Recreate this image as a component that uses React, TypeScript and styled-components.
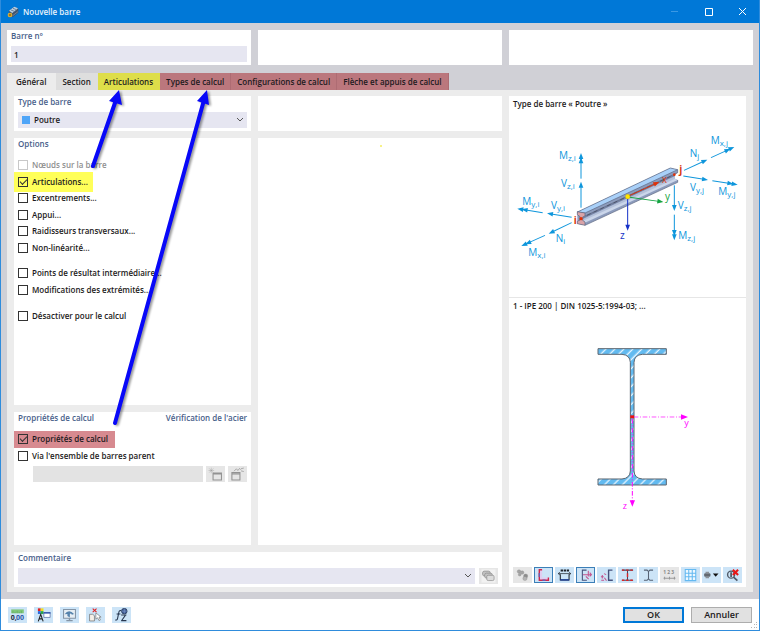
import React, { useState } from "react";
import styled, { createGlobalStyle, css } from "styled-components";

const GlobalStyle = createGlobalStyle`
  * { box-sizing: border-box; }
  body { margin: 0; background: #fff; }
  body, button, input, select {
    font-family: "Open Sans", "Noto Sans", sans-serif;
    font-size: 8px;
    font-weight: 600;
    line-height: 12px;
    color: #1c1a20;
  }
  button, input, select { margin: 0; padding: 0; border: 0; border-radius: 0; }
`;

const Window = styled.main`
  position: relative;
  display: flex;
  flex-direction: column;
  min-height: 100vh;
  border: 1px solid #2f8cdc;
  border-top: 0;
  background: #fff;
`;

const TitleBar = styled.header`
  display: flex;
  align-items: center;
  height: 23px;
  padding-left: 6px;
  background: #0078d7;
  color: #e8f3fc;
`;

const Title = styled.h1`
  flex: 1;
  margin: 0 0 0 4px;
  font-size: 8px;
  font-weight: 600;
`;

const WindowButton = styled.button`
  display: grid;
  place-items: center;
  width: 34px;
  height: 23px;
  background: transparent;
`;

const Body = styled.div`
  flex: 1;
  display: flex;
  flex-direction: column;
  padding: 7px 6px;
  background: #d0d0d6;
`;

const TopCards = styled.div`
  display: grid;
  grid-template-columns: repeat(3, 1fr);
  gap: 7px;
  margin-bottom: 8px;
`;

const Card = styled.section<{ $area?: string }>`
  display: flex;
  flex-direction: column;
  min-width: 0;
  min-height: 35px;
  padding: 0 4px 3px;
  background: #fff;
  grid-area: ${(p) => p.$area ?? "auto"};
`;

const Heading = styled.h2`
  display: flex;
  justify-content: space-between;
  margin: 0;
  height: 16px;
  font-size: 8px;
  font-weight: 600;
  color: #48608a;
`;

const TextInput = styled.input`
  flex: 1 1 16px;
  min-width: 0;
  width: 100%;
  height: 16px;
  padding: 0 3px;
  background: #e6e6f1;
  &:disabled { background: #e3e3e3; }
`;

const Tabs = styled.div`
  display: flex;
  height: 17px;
`;

type Tone = "active" | "plain" | "yellow" | "red";
const tabTone: Record<Tone, string> = {
  active: "#ececec",
  plain: "#dedede",
  yellow: "#dede49",
  red: "#bb777d",
};

const Tab = styled.button<{ $tone: Tone }>`
  padding: 1px ${(p) => (p.$tone === "active" ? 9 : 6)}px 0;
  white-space: nowrap;
  background: ${(p) => tabTone[p.$tone]};
  border-right: 1px solid ${(p) => (p.$tone === "red" ? "#ae6c73" : tabTone[p.$tone])};
`;

const TabPanel = styled.div`
  flex: 1;
  display: grid;
  grid-template-columns: 237fr 244fr 237fr;
  grid-template-rows: 35px 2fr 1fr 35px;
  grid-template-areas:
    "type blank preview"
    "options main preview"
    "props main preview"
    "comment comment preview";
  gap: 7px;
  padding: 6px 7px 5px;
  background: #ececec;
`;

const SelectBox = styled.div`
  position: relative;
  display: flex;
  flex: 1;
  height: 16px;
`;

const Select = styled.select<{ $swatch?: boolean }>`
  appearance: none;
  flex: 1;
  height: 16px;
  padding: 0 14px 0 ${(p) => (p.$swatch ? 16 : 4)}px;
  background: #e6e6f1;
`;

const Chevron = styled.svg`
  position: absolute;
  right: 3px;
  top: 5px;
  pointer-events: none;
`;

const Swatch = styled.span`
  position: absolute;
  left: 4px;
  top: 4px;
  width: 8px;
  height: 8px;
  background: #4fa5f8;
`;

const Options = styled.div`
  padding-top: 3px;
`;

const CheckGroup = styled.div<{ $height: number }>`
  display: grid;
  grid-auto-rows: 1fr;
  align-items: center;
  justify-items: start;
  height: ${(p) => p.$height}px;
  margin-bottom: 9px;
`;

const PropsGroup = styled(CheckGroup)`
  margin: 3px 0 1px;
`;

const CheckLabel = styled.label<{ $mark?: "yellow" | "red"; $disabled?: boolean }>`
  display: flex;
  align-items: center;
  gap: 4px;
  height: 16px;
  white-space: nowrap;
  color: ${(p) => (p.$disabled ? "#8f8f8f" : "inherit")};
  ${(p) =>
    p.$mark === "yellow" &&
    css`
      height: 20px;
      margin: -2px 0 -2px -4px;
      padding: 0 5px 0 4px;
      background: #ffff59;
    `}
  ${(p) =>
    p.$mark === "red" &&
    css`
      height: 17px;
      margin-left: -4px;
      padding: 0 7px 0 4px;
      background: #d78a90;
    `}
`;

const CheckInput = styled.input`
  appearance: none;
  display: grid;
  width: 10px;
  height: 10px;
  border: 1px solid #333;
  background: transparent;
  &:disabled { border-color: #c8c8c8; }
  &:checked::after {
    content: "";
    width: 6px;
    height: 3px;
    margin: 1px 0 0 1px;
    border: solid #333;
    border-width: 0 0 1px 1px;
    rotate: -45deg;
  }
`;

const ParentRow = styled.div`
  display: flex;
  gap: 3px;
  padding-left: 15px;
`;

const Row = styled.div`
  display: flex;
  gap: 4px;
`;

const ToolButton = styled.button<{ $state?: "on" | "off" }>`
  display: grid;
  place-items: center;
  flex: none;
  width: 19px;
  height: 16px;
  background: ${(p) => (p.$state === "off" ? "#e6e6e6" : "#cce4f7")};
  box-shadow: ${(p) => (p.$state === "on" ? "inset 0 0 0 1px #3c7fb8" : "none")};
`;

const Preview = styled(Card)`
  padding: 0 0 4px;
`;

const PreviewTitle = styled.h3`
  margin: 0;
  height: 16px;
  padding: 2px 4px 0;
  font-size: 8px;
  font-weight: 600;
`;

const BeamSvg = styled.svg`
  display: block;
  width: 100%;
  font-weight: 400;
`;

const SectionPart = styled.div`
  flex: 1;
  display: flex;
  flex-direction: column;
  border-top: 1px solid #e6e6e6;
`;

const SectionSvg = styled.svg`
  display: block;
  width: 100%;
  flex: 1;
  min-height: 0;
  font-weight: 400;
`;

const Toolbar = styled.div<{ $gap: number }>`
  display: flex;
  gap: ${(p) => p.$gap}px;
  padding: 0 4px;
`;

const Footer = styled.footer`
  display: flex;
  align-items: center;
  justify-content: space-between;
  height: 31px;
  padding: 0 7px 0 3px;
`;

const DialogButtons = styled.div`
  display: flex;
  gap: 7px;
`;

const DialogButton = styled.button<{ $primary?: boolean }>`
  width: 61px;
  height: 16px;
  font-size: 9px;
  line-height: 10px;
  background: #e1e1e1;
  border: ${(p) => (p.$primary ? "2px solid #0078d7" : "1px solid #adadad")};
`;

const Grip = styled.svg`
  position: absolute;
  right: 1px;
  bottom: 1px;
`;

const Annotations = styled.svg`
  position: absolute;
  left: -1px;
  top: 0;
  pointer-events: none;
`;

const ArrowLayer = styled.g`
  filter: drop-shadow(2px 1px 1px rgba(0, 0, 0, 0.4));
`;

function Caret() {
  return (
    <Chevron width="8" height="6" viewBox="0 0 8 6" fill="none" stroke="#555">
      <path d="M1 1 L4 4 L7 1" />
    </Chevron>
  );
}

function Check(props: {
  text: string;
  checked?: boolean;
  disabled?: boolean;
  mark?: "yellow" | "red";
}) {
  return (
    <CheckLabel $mark={props.mark} $disabled={props.disabled}>
      <CheckInput type="checkbox" defaultChecked={props.checked} disabled={props.disabled} />
      {props.text}
    </CheckLabel>
  );
}

/* Force or moment arrow; a moment carries a second head. */
function Arrow(props: {
  x1: number;
  y1: number;
  x2: number;
  y2: number;
  color?: string;
  double?: boolean;
}) {
  const { x1, y1, x2, y2, color = "#0e96dc", double } = props;
  const angle = (Math.atan2(y2 - y1, x2 - x1) * 180) / Math.PI;
  const length = Math.hypot(x2 - x1, y2 - y1);
  return (
    <g transform={`translate(${x1} ${y1}) rotate(${angle})`} fill={color} stroke={color}>
      <path d={`M0 0H${length - 8}`} strokeWidth="3" />
      <path d={`M${length} 0l-18 -7v14z`} stroke="none" />
      {double && <path d={`M${length - 13} 0l-18 -7v14z`} stroke="none" />}
    </g>
  );
}

function ForceLabel(props: { x: number; y: number; main: string; sub: string }) {
  return (
    <text x={props.x} y={props.y} fontSize="30" fontWeight="500" fill="#0e96dc">
      {props.main}
      <tspan fontSize="24" dy="6">
        {props.sub}
      </tspan>
    </text>
  );
}

function BeamDiagram() {
  return (
    <BeamSvg viewBox="12 -54 711 555" aria-label="Poutre">
      <path d="M217 246L496 114L518 119V128L510 134V146L518 150V157L240 286L217 281Z" fill="#8c9bbc" />
      <path d="M233 261L510 132V150L233 277Z" fill="#b3c0da" />
      <path d="M233 261L510 132V138L233 267Z" fill="#7683a5" />
      <path d="M233 273L510 146L518 150L240 278Z" fill="#cbd6ea" />
      <path d="M217 246L496 114L518 119L240 249Z" fill="#a9d0f8" />
      <g stroke="#59637e" strokeWidth="2" strokeLinejoin="round" fill="none">
        <path d="M217 246L496 114L518 119L240 249ZM240 258L518 128V119M240 286L518 157V150" />
        <path
          d="M217 245L240 249V258L233 261V271L240 276V286L217 281V274L225 270V260L217 254Z"
          fill="#d9a3a8"
        />
      </g>
      <path d="M246 256L508 134" stroke="#3f4658" strokeWidth="2" strokeDasharray="12 10" />
      <circle cx="228" cy="266" r="5" fill="#e03008" />
      <circle cx="508" cy="134" r="4" fill="#e03008" />

      <Arrow x1={228} y1={233} x2={228} y2={155} />
      <Arrow x1={228} y1={146} x2={228} y2={69} double />
      <Arrow x1={200} y1={262} x2={126} y2={250} />
      <Arrow x1={113} y1={248} x2={37} y2={236} double />
      <Arrow x1={200} y1={278} x2={131} y2={311} />
      <Arrow x1={120} y1={316} x2={49} y2={348} double />
      <Arrow x1={537} y1={121} x2={607} y2={89} />
      <Arrow x1={618} y1={83} x2={688} y2={51} double />
      <Arrow x1={535} y1={138} x2={609} y2={150} />
      <Arrow x1={622} y1={152} x2={698} y2={164} double />
      <Arrow x1={508} y1={166} x2={508} y2={243} />
      <Arrow x1={508} y1={254} x2={508} y2={331} double />
      <Arrow x1={368} y1={199} x2={463} y2={156} color="#e03008" />
      <Arrow x1={368} y1={201} x2={475} y2={216} color="#12a340" />
      <Arrow x1={368} y1={201} x2={368} y2={302} color="#1531c8" />
      <circle cx="368" cy="200" r="7" fill="#ffe600" stroke="#d4b000" />

      <ForceLabel x={162} y={87} main="M" sub="z,i" />
      <ForceLabel x={168} y={170} main="V" sub="z,i" />
      <ForceLabel x={52} y={224} main="M" sub="y,i" />
      <ForceLabel x={138} y={238} main="V" sub="y,i" />
      <ForceLabel x={152} y={336} main="N" sub="i" />
      <ForceLabel x={70} y={379} main="M" sub="x,i" />
      <ForceLabel x={617} y={41} main="M" sub="x,j" />
      <ForceLabel x={554} y={80} main="N" sub="j" />
      <ForceLabel x={555} y={182} main="V" sub="y,j" />
      <ForceLabel x={640} y={194} main="M" sub="y,j" />
      <ForceLabel x={518} y={238} main="V" sub="z,j" />
      <ForceLabel x={520} y={326} main="M" sub="z,j" />
      <g fontSize="30" fontWeight="500">
        <text x="206" y="282" fill="#d83a10" fontWeight="700">i</text>
        <text x="523" y="130" fill="#d83a10" fontWeight="700">j</text>
        <text x="470" y="159" fill="#d83a10">x</text>
        <text x="480" y="209" fill="#12a340">y</text>
        <text x="345" y="328" fill="#1531c8">z</text>
      </g>
    </BeamSvg>
  );
}

const profile =
  "M279 85H484V102H412Q388 104 387 126V452Q388 474 412 476H484V494H279V476H351Q375 474 376 452V126Q375 104 351 102H279Z";

function SectionDiagram() {
  return (
    <SectionSvg viewBox="12 -13 711 747" aria-label="IPE 200">
      <defs>
        <pattern id="hatch" width="19" height="19" patternUnits="userSpaceOnUse" patternTransform="rotate(45)">
          <path d="M9 0V19" stroke="#e4f4ff" strokeWidth="4" />
        </pattern>
      </defs>
      <path d={profile} fill="#62baf0" />
      <path d={profile} fill="url(#hatch)" stroke="#5d6670" strokeWidth="3" />
      <g stroke="#ff00ff" strokeWidth="2" strokeDasharray="14 5 3 5">
        <path d="M386 290H530" />
        <path d="M382 296V542" strokeWidth="3" />
      </g>
      <path d="M528 282V298L549 290ZM374 540H390L382 559Z" fill="#ff00ff" />
      <rect x="376" y="285" width="11" height="9" fill="#f01010" />
      <g fill="#ff00ff" fontSize="27">
        <text x="538" y="317">y</text>
        <text x="353" y="567">z</text>
      </g>
    </SectionSvg>
  );
}

const glyph: Record<string, React.ReactNode> = {
  spheres: (
    <g fill="#a4a4a4" stroke="#888" strokeWidth="1">
      <circle cx="11" cy="10" r="5" /><circle cx="20" cy="13" r="5" /><circle cx="13" cy="19" r="4" />
      <circle cx="30" cy="23" r="6" fill="#8c8c8c" /><circle cx="28" cy="30" r="6" fill="#b4b4b4" />
    </g>
  ),
  angle: (
    <g fill="none">
      <path d="M9 5H17V27H35V35H9Z" fill="#e1cdf0" />
      <path d="M17 5H9V35H35V27" stroke="#d0264c" strokeWidth="4" />
      <path d="M9 14V26M18 35H27" stroke="#6c5bb0" strokeWidth="4" />
    </g>
  ),
  width: (
    <g stroke="#20242a" fill="none">
      <path d="M10 7H34" strokeWidth="6" strokeDasharray="7 2" />
      <path d="M3 16H39M3 16l5 -4M3 16l5 4M39 16l-5 -4M39 16l-5 4" strokeWidth="2" />
      <path d="M9 18V34H34V18" strokeWidth="3" />
      <path d="M9 34H34" stroke="#1b3f9c" strokeWidth="4" />
    </g>
  ),
  axesIn: (
    <g fill="none" strokeWidth="3">
      <path d="M24 6H12V35H25" stroke="#45507b" />
      <path d="M14 19H37M29 8v16M22 24l8 8M33 13l5 6l-5 5" stroke="#c4528d" />
    </g>
  ),
  axesOut: (
    <g fill="none">
      <path d="M38 6H27V35H39" stroke="#45507b" strokeWidth="4" />
      <path d="M5 25h8M9 20v10M14 16l6 3M6 35h8M15 28l6 8" stroke="#c4528d" strokeWidth="3" />
    </g>
  ),
  ibeamRed: (
    <g fill="none" strokeWidth="3">
      <path d="M21 6V35M5 6H37M5 35H37" stroke="#3c4961" />
      <path d="M5 6H37M5 35H37" stroke="#dd2525" strokeWidth="4" strokeDasharray="7 5" />
      <path d="M21 15v11" stroke="#dd2525" strokeWidth="4" />
    </g>
  ),
  ibeam: <path d="M8 6H17L21 10L25 6H34M21 10V31M8 35H17L21 31L25 35H34" fill="none" stroke="#566274" strokeWidth="3" />,
  numbers: (
    <g fill="#888">
      <text x="3" y="17" fontSize="14" fontWeight="700">1 2 3</text>
      <path d="M4 29H38M7 25v8M21 25v8M35 25v8" stroke="#999" strokeWidth="3" />
    </g>
  ),
  grid: (
    <path d="M6 4H36V36H6ZM6 15H36M6 25H36M16 4V36M26 4V36" fill="#eef8ff" stroke="#64b9f1" strokeWidth="3" />
  ),
  printer: (
    <g fill="#626870">
      <rect x="0" y="15" width="18" height="10" rx="3" /><path d="M4 11H14V15H4ZM4 25H14V29H4Z" fill="#8c9198" />
      <path d="M25 16H41L33 25Z" fill="#111" />
    </g>
  ),
  zoomReset: (
    <g fill="none">
      <circle cx="17" cy="19" r="10" stroke="#505a68" strokeWidth="4" />
      <path d="M17 12v14M24 26l11 10" stroke="#505a68" strokeWidth="5" />
      <path d="M22 5L37 20M37 5L22 20" stroke="#e81818" strokeWidth="6" />
    </g>
  ),
  layers: (
    <g fill="#c2c2c2" stroke="#8d8d8d" strokeWidth="2">
      <path d="M1 1H41V39H1Z" fill="#f2f2f2" stroke="none" />
      <rect x="4" y="6" width="22" height="14" rx="5" /><rect x="10" y="12" width="22" height="14" rx="5" />
      <rect x="16" y="18" width="21" height="15" rx="4" fill="#dcdcdc" />
    </g>
  ),
  create: (
    <g fill="none" stroke="#929292" strokeWidth="3">
      <path d="M14 17H38V37H14ZM14 20H38" /><path d="M9 2V18M1 10H17M3 4L15 16M15 4L3 16" strokeWidth="1" />
    </g>
  ),
  edit: (
    <g fill="none" stroke="#929292" strokeWidth="3">
      <path d="M5 16H28V37H5ZM5 20H28" /><path d="M11 12l7 -7l4 5l5 -6l3 4M31 5l8 -2M31 11l8 2" strokeWidth="2" />
    </g>
  ),
  decimals: (
    <g>
      <path d="M3 4H39V15H3Z" fill="#7fc77a" /><path d="M8 8v7M14 11v4M20 8v7M26 11v4M32 8v7" stroke="#3d8c42" />
      <text x="2" y="34" fontSize="20" fontWeight="700" fill="#202a3a">0,</text>
      <text x="17" y="34" fontSize="20" fontWeight="700" fill="#2b57a8">00</text>
    </g>
  ),
  display: (
    <g>
      <path d="M5 1h8v8H5z" fill="#e22020" /><path d="M13 1h8v8h-8z" fill="#f2de20" />
      <path d="M5 9h8v8H5z" fill="#2b6be0" /><path d="M13 9h8v8h-8z" fill="#28a745" />
      <path d="M6 38L13 18L20 38M9 31H18" fill="none" stroke="#222" strokeWidth="3" />
      <path d="M22 13H40V27H22Z" fill="#fff" stroke="#5468a2" strokeWidth="2" /><path d="M21 14H41" stroke="#2b50ad" strokeWidth="4" />
    </g>
  ),
  screen: (
    <g>
      <path d="M4 4H38V29H4Z" fill="#e6eef4" stroke="#8494a5" strokeWidth="3" />
      <path d="M7 18Q19 1 34 17L28 19Q24 13 22 18V27L15 23V17Z" fill="#5583ac" />
      <path d="M21 29V35M12 36H30" stroke="#8494a5" strokeWidth="4" />
    </g>
  ),
  pick: (
    <g>
      <path d="M4 18H13L18 22V37H4Z" fill="#f4efe8" stroke="#6b6b6b" strokeWidth="2" />
      <path d="M22 14V32L27 28L31 36L35 34L31 26H37Z" fill="#fff" stroke="#777" strokeWidth="2" />
      <path d="M13 2L24 12M24 2L13 12" stroke="#df1f1f" strokeWidth="3" />
    </g>
  ),
  formula: (
    <g fill="none" stroke="#26364f" strokeWidth="3">
      <path d="M20 8Q14 5 13 14L10 29Q9 36 3 34M7 17H18" />
      <path d="M20 20H35M20 36H35M22 35L32 21" />
      <circle cx="29" cy="9" r="8" fill="#405f9c" strokeWidth="2" /><path d="M22 9H36M29 2V16" stroke="#a9bce0" strokeWidth="1" />
    </g>
  ),
};

function Tool(props: { icon: string; label: string; state?: "on" | "off" }) {
  return (
    <ToolButton $state={props.state} disabled={props.state === "off"} aria-label={props.label}>
      <svg width="15" height="14" viewBox="0 0 42 40">{glyph[props.icon]}</svg>
    </ToolButton>
  );
}

const tabs: { text: string; tone: Tone }[] = [
  { text: "Général", tone: "active" },
  { text: "Section", tone: "plain" },
  { text: "Articulations", tone: "yellow" },
  { text: "Types de calcul", tone: "red" },
  { text: "Configurations de calcul", tone: "red" },
  { text: "Flèche et appuis de calcul", tone: "red" },
];

export default function App() {
  const [tab, setTab] = useState(0);
  return (
    <>
      <GlobalStyle />
      <Window>
        <TitleBar>
          <svg width="12" height="12" viewBox="0 0 36 36">
            <path d="M5 15L22 2L34 8V20L17 34L7 24Z" fill="#41546d" />
            <path d="M6 14L22 2L33 7L16 21Z" fill="#b9d0e4" />
            <path d="M12 12l10 4M18 7l10 4M17 29L33 17" stroke="#6e8299" strokeWidth="3" />
            <circle cx="9" cy="27" r="7" fill="#e5b336" />
            <path d="M9 23v8M5 27h8" stroke="#6c4b08" strokeWidth="2" />
          </svg>
          <Title>Nouvelle barre</Title>
          <WindowButton aria-label="Réduire">
            <svg width="9" height="9" viewBox="0 0 18 18"><path d="M2 9H16" stroke="#3a98e4" strokeWidth="2" /></svg>
          </WindowButton>
          <WindowButton aria-label="Agrandir">
            <svg width="9" height="9" viewBox="0 0 18 18"><path d="M3 3H17V17H3Z" fill="none" stroke="#fff" strokeWidth="2" /></svg>
          </WindowButton>
          <WindowButton aria-label="Fermer">
            <svg width="9" height="9"><path d="M1 1L8 8M8 1L1 8" stroke="#fff" /></svg>
          </WindowButton>
        </TitleBar>

        <Body>
          <TopCards>
            <Card>
              <Heading><label htmlFor="number">Barre n°</label></Heading>
              <TextInput id="number" defaultValue="1" />
            </Card>
            <Card />
            <Card />
          </TopCards>

          <Tabs role="tablist">
            {tabs.map((t, i) => (
              <Tab key={t.text} role="tab" aria-selected={tab === i} $tone={t.tone} onClick={() => setTab(i)}>
                {t.text}
              </Tab>
            ))}
          </Tabs>

          <TabPanel role="tabpanel">
            <Card $area="type">
              <Heading><label htmlFor="type">Type de barre</label></Heading>
              <SelectBox>
                <Select id="type" $swatch><option>Poutre</option></Select>
                <Swatch />
                <Caret />
              </SelectBox>
            </Card>
            <Card $area="blank" />
            <Card $area="options">
              <Heading>Options</Heading>
              <Options>
                <CheckGroup $height={99}>
                  <Check text="Nœuds sur la barre" disabled />
                  <Check text="Articulations..." checked mark="yellow" />
                  <Check text="Excentrements..." />
                  <Check text="Appui..." />
                  <Check text="Raidisseurs transversaux..." />
                  <Check text="Non-linéarité..." />
                </CheckGroup>
                <CheckGroup $height={33}>
                  <Check text="Points de résultat intermédiaire..." />
                  <Check text="Modifications des extrémités..." />
                </CheckGroup>
                <CheckGroup $height={17}>
                  <Check text="Désactiver pour le calcul" />
                </CheckGroup>
              </Options>
            </Card>
            <Card $area="main" />
            <Card $area="props">
              <Heading>
                <span>Propriétés de calcul</span>
                <span>Vérification de l'acier</span>
              </Heading>
              <PropsGroup $height={34}>
                <Check text="Propriétés de calcul" checked mark="red" />
                <Check text="Via l'ensemble de barres parent" />
              </PropsGroup>
              <ParentRow>
                <TextInput disabled aria-label="Ensemble de barres parent" />
                <Tool icon="create" label="Nouveau" state="off" />
                <Tool icon="edit" label="Modifier" state="off" />
              </ParentRow>
            </Card>
            <Card $area="comment">
              <Heading><label htmlFor="comment">Commentaire</label></Heading>
              <Row>
                <SelectBox>
                  <Select id="comment"><option></option></Select>
                  <Caret />
                </SelectBox>
                <Tool icon="layers" label="Commentaires" state="off" />
              </Row>
            </Card>

            <Preview $area="preview">
              <PreviewTitle>Type de barre « Poutre »</PreviewTitle>
              <BeamDiagram />
              <SectionPart>
                <PreviewTitle>1 - IPE 200 | DIN 1025-5:1994-03; ...</PreviewTitle>
                <SectionDiagram />
              </SectionPart>
              <Toolbar $gap={2}>
                <Tool icon="spheres" label="Rendu" state="off" />
                <Tool icon="angle" label="Contour" state="on" />
                <Tool icon="width" label="Dimensions" />
                <Tool icon="axesIn" label="Axes principaux" state="on" />
                <Tool icon="axesOut" label="Axes de cisaillement" />
                <Tool icon="ibeamRed" label="Points de contrainte" />
                <Tool icon="ibeam" label="Éléments" />
                <Tool icon="numbers" label="Numérotation" state="off" />
                <Tool icon="grid" label="Grille" />
                <Tool icon="printer" label="Imprimer" />
                <Tool icon="zoomReset" label="Réinitialiser la vue" />
              </Toolbar>
            </Preview>
          </TabPanel>
        </Body>

        <Footer>
          <Toolbar $gap={7}>
            <Tool icon="decimals" label="Unités" />
            <Tool icon="display" label="Affichage" />
            <Tool icon="screen" label="Vue" />
            <Tool icon="pick" label="Sélection" />
            <Tool icon="formula" label="Formule" />
          </Toolbar>
          <DialogButtons>
            <DialogButton $primary>OK</DialogButton>
            <DialogButton>Annuler</DialogButton>
          </DialogButtons>
        </Footer>

        <Grip width="7" height="7" fill="#b5b5b5">
          <path d="M5 0h1v1h-1zM3 2h1v1h-1zM5 2h1v1h-1zM0 5h1v1h-1zM3 5h1v1h-1zM5 5h1v1h-1z" />
        </Grip>

        <Annotations width="700" height="450" viewBox="0 0 700 450">
          <ArrowLayer>
            <g stroke="#0808f8" strokeWidth="4" strokeLinecap="round">
              <path d="M93 166L116 100" />
              <path d="M115 423L204 100" />
            </g>
            <path d="M119 90L122 105L109 101ZM207 90L209 105L197 101Z" fill="#0808f8" />
          </ArrowLayer>
          <circle cx="381" cy="146" r="1" fill="#f4ee60" />
        </Annotations>
      </Window>
    </>
  );
}
